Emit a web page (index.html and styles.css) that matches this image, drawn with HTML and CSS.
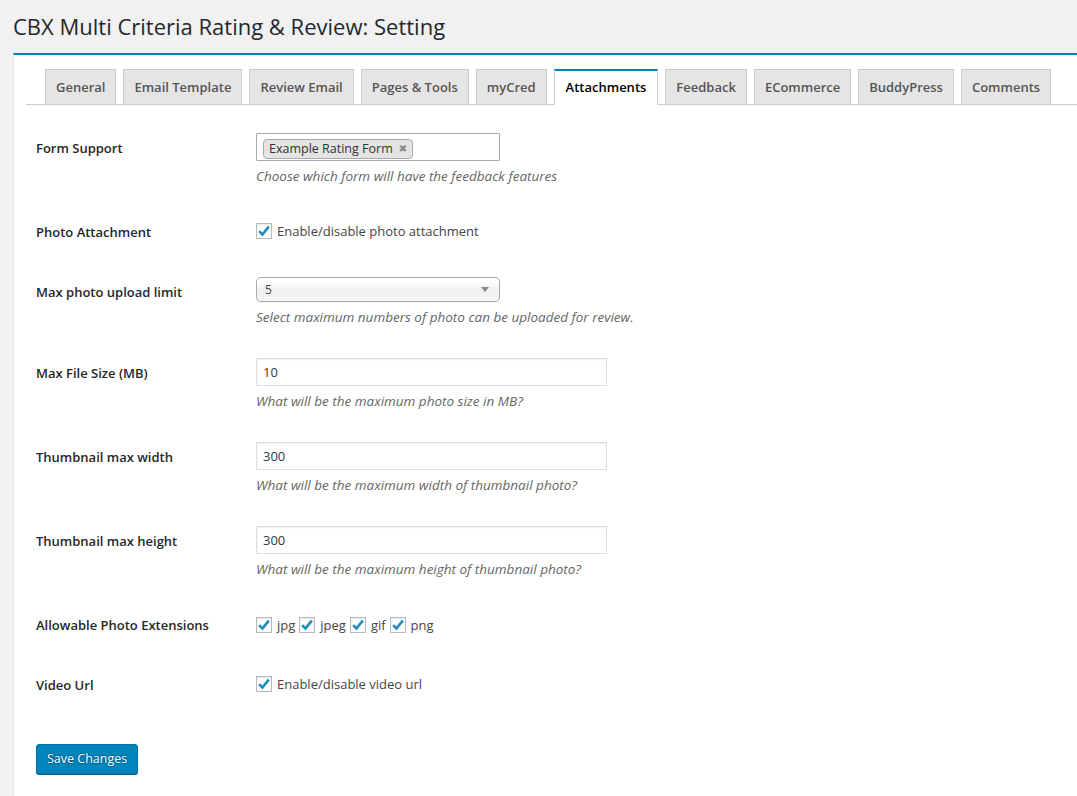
FILE: index.html
```html
<!DOCTYPE html>
<html lang="en">
<head>
<meta charset="utf-8">
<title>CBX Multi Criteria Rating &amp; Review: Setting</title>
<link rel="stylesheet" href="styles.css">
</head>
<body>
<div class="wrap">
  <h1 class="page-title">CBX Multi Criteria Rating &amp; Review: Setting</h1>
  <div class="panel">
    <nav class="nav-tabs">
      <a class="nav-tab">General</a>
      <a class="nav-tab">Email Template</a>
      <a class="nav-tab">Review Email</a>
      <a class="nav-tab">Pages &amp; Tools</a>
      <a class="nav-tab">myCred</a>
      <a class="nav-tab active">Attachments</a>
      <a class="nav-tab">Feedback</a>
      <a class="nav-tab">ECommerce</a>
      <a class="nav-tab">BuddyPress</a>
      <a class="nav-tab">Comments</a>
    </nav>

    <form class="settings-form">
      <table class="form-table">
        <tr>
          <th>Form Support</th>
          <td>
            <div class="multi-select">
              <span class="tag">Example Rating Form<span class="tag-x">✖</span></span>
            </div>
            <p class="description">Choose which form will have the feedback features</p>
          </td>
        </tr>
        <tr>
          <th>Photo Attachment</th>
          <td>
            <label class="check-label"><span class="checkbox"><svg viewBox="0 0 16 16" width="16" height="16"><path d="M3.2 8.2 L6.4 11.6 L12.8 3.6" /></svg></span>Enable/disable photo attachment</label>
          </td>
        </tr>
        <tr>
          <th>Max photo upload limit</th>
          <td>
            <div class="select-box"><span>5</span><span class="arrow"></span></div>
            <p class="description">Select maximum numbers of photo can be uploaded for review.</p>
          </td>
        </tr>
        <tr>
          <th>Max File Size (MB)</th>
          <td>
            <div class="text-input">10</div>
            <p class="description">What will be the maximum photo size in MB?</p>
          </td>
        </tr>
        <tr>
          <th>Thumbnail max width</th>
          <td>
            <div class="text-input">300</div>
            <p class="description">What will be the maximum width of thumbnail photo?</p>
          </td>
        </tr>
        <tr>
          <th>Thumbnail max height</th>
          <td>
            <div class="text-input">300</div>
            <p class="description">What will be the maximum height of thumbnail photo?</p>
          </td>
        </tr>
        <tr>
          <th>Allowable Photo Extensions</th>
          <td>
            <div class="check-list">
              <label class="check-label"><span class="checkbox"><svg viewBox="0 0 16 16" width="16" height="16"><path d="M3.2 8.2 L6.4 11.6 L12.8 3.6" /></svg></span>jpg</label>
              <label class="check-label"><span class="checkbox"><svg viewBox="0 0 16 16" width="16" height="16"><path d="M3.2 8.2 L6.4 11.6 L12.8 3.6" /></svg></span>jpeg</label>
              <label class="check-label"><span class="checkbox"><svg viewBox="0 0 16 16" width="16" height="16"><path d="M3.2 8.2 L6.4 11.6 L12.8 3.6" /></svg></span>gif</label>
              <label class="check-label"><span class="checkbox"><svg viewBox="0 0 16 16" width="16" height="16"><path d="M3.2 8.2 L6.4 11.6 L12.8 3.6" /></svg></span>png</label>
            </div>
          </td>
        </tr>
        <tr>
          <th>Video Url</th>
          <td>
            <label class="check-label"><span class="checkbox"><svg viewBox="0 0 16 16" width="16" height="16"><path d="M3.2 8.2 L6.4 11.6 L12.8 3.6" /></svg></span>Enable/disable video url</label>
          </td>
        </tr>
      </table>
      <div class="submit">
        <button type="button" class="button-primary">Save Changes</button>
      </div>
    </form>
  </div>
</div>
</body>
</html>
```

FILE: styles.css
```css
* { box-sizing: border-box; }

html, body {
  margin: 0;
  padding: 0;
  height: 100%;
}

body {
  background: #f1f1f1;
  font-family: "Open Sans", "Noto Sans", sans-serif;
  font-size: 13px;
  color: #444;
  overflow: hidden;
}

.wrap {
  padding-left: 13px;
  min-height: 100%;
  display: flex;
  flex-direction: column;
}

.page-title {
  margin: 0 0 12px 0;
  padding: 11px 0 0 0;
  font-size: 22px;
  line-height: 30px;
  font-weight: 400;
  color: #23282d;
}

.panel {
  flex: 1;
  background: #fff;
  border-top: 2px solid #0085ba;
  border-left: 1px solid #e5e5e5;
  padding: 14px 0 0 12px;
}

.nav-tabs {
  display: flex;
  border-bottom: 1px solid #ccc;
  padding-left: 12px;
}

.nav-tab {
  display: block;
  margin-left: 7px;
  padding: 5px 10px;
  line-height: 24px;
  font-size: 13px;
  font-weight: 600;
  color: #555;
  background: #e5e5e5;
  border: 1px solid #ccc;
  border-bottom: none;
  white-space: nowrap;
  cursor: pointer;
}

.nav-tab.active {
  background: #fff;
  color: #000;
  border-top: 2px solid #0085ba;
  padding: 4px 11px 6px 11px;
  margin-bottom: -1px;
}

.settings-form {
  margin: 13px 0 0 10px;
}

.form-table {
  border-collapse: collapse;
  border-spacing: 0;
}

.form-table th {
  vertical-align: top;
  text-align: left;
  padding: 20px 10px 20px 0;
  width: 210px;
  line-height: 20px;
  font-size: 13px;
  font-weight: 600;
  color: #23282d;
}

.form-table td {
  padding: 15px 10px;
  vertical-align: middle;
  line-height: 20px;
}

.description {
  margin: 5px 0 0 0;
  line-height: 21px;
  font-size: 13.5px;
  font-style: italic;
  color: #666;
}

.multi-select {
  width: 244px;
  height: 28px;
  border: 1px solid #aaa;
  border-radius: 1px;
  background: #fff;
  padding: 4px 6px;
}

.tag {
  display: inline-flex;
  align-items: center;
  height: 20px;
  padding: 0 5px;
  background: #e4e4e4;
  border: 1px solid #aaa;
  border-radius: 4px;
  font-size: 12.5px;
  color: #333;
  line-height: 18px;
}

.tag-x {
  margin-left: 6px;
  color: #888;
  font-family: "DejaVu Sans", sans-serif;
  font-size: 10px;
  line-height: 18px;
}

.select-box {
  width: 244px;
  height: 25px;
  border: 1px solid #aaa;
  border-radius: 5px;
  background: linear-gradient(#fff 20%, #f0f0f0 50%, #f6f6f6 100%);
  display: flex;
  align-items: center;
  justify-content: space-between;
  padding: 0 10px 0 8px;
  font-size: 12px;
  color: #444;
  box-shadow: 0 0 2px #fff inset, 0 1px 1px rgba(0,0,0,0.06);
}

.arrow {
  width: 0;
  height: 0;
  border-left: 4px solid transparent;
  border-right: 4px solid transparent;
  border-top: 5px solid #888;
}

.text-input {
  width: 351px;
  height: 28px;
  border: 1px solid #ddd;
  box-shadow: inset 0 1px 2px rgba(0,0,0,0.07);
  padding: 0 6px;
  line-height: 26px;
  font-size: 13px;
  color: #32373c;
}

.check-label {
  display: inline-flex;
  align-items: center;
  font-size: 13px;
  color: #444;
  line-height: 20px;
}

.check-list {
  display: flex;
  gap: 4px;
}

.checkbox {
  width: 16px;
  height: 16px;
  border: 1px solid #b4b9be;
  background: #fff;
  box-shadow: inset 0 1px 2px rgba(0,0,0,0.1);
  margin-right: 5px;
  display: inline-flex;
  align-items: center;
  justify-content: center;
  position: relative;
}

.checkbox svg {
  position: absolute;
  left: -1px;
  top: -1px;
}

.checkbox path {
  fill: none;
  stroke: #1e8cbe;
  stroke-width: 2.6;
  stroke-linecap: butt;
  stroke-linejoin: miter;
}

.submit {
  padding-top: 29px;
}

.button-primary {
  height: 30px;
  padding: 0 10px;
  font-family: "Open Sans", "Noto Sans", sans-serif;
  font-size: 12.5px;
  line-height: 28px;
  color: #fff;
  background: #0085ba;
  border: 1px solid #0073aa;
  border-radius: 3px;
  box-shadow: 0 1px 0 #006799;
  text-shadow: 0 -1px 1px #006799, 1px 0 1px #006799, 0 1px 1px #006799, -1px 0 1px #006799;
  cursor: pointer;
}
```
